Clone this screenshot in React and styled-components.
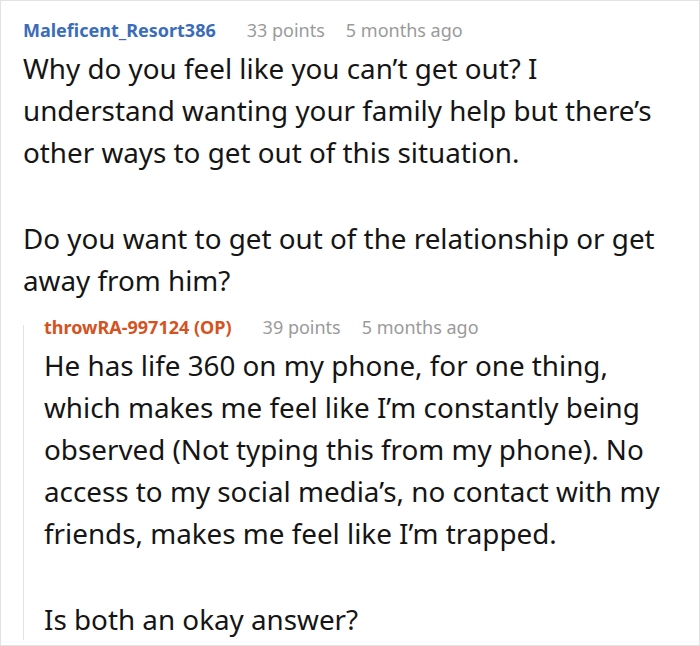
import styled, { createGlobalStyle } from "styled-components";

const Global = createGlobalStyle`
  body {
    margin: 0;
    background: #fff;
    font-family: "Noto Sans", "Open Sans", sans-serif;
  }
`;

const Frame = styled.div`
  width: 700px;
  height: 646px;
  box-sizing: border-box;
  border: 1px solid #e2e2e2;
  padding: 17px 38px 0 22px;
  overflow: hidden;
`;

const Meta = styled.div`
  display: flex;
  align-items: baseline;
  gap: 31px;
  font-size: 18px;
  line-height: 24px;
  white-space: nowrap;
`;

const Author = styled.span`
  font-weight: 700;
  color: ${(p) => (p.$op ? "#d4531f" : "#3b6cba")};
`;

const Info = styled.span`
  display: flex;
  gap: 21px;
  color: #9a9a9a;
`;

const Body = styled.div`
  margin-top: 5px;
  color: #151515;
  font-size: 27.8px;
  line-height: 42px;
`;

const Para = styled.p`
  margin: 0;
  & + & {
    margin-top: 44px;
  }
`;

const Reply = styled.div`
  position: relative;
  margin-top: 14px;
  padding-left: 21px;

  &::before {
    content: "";
    position: absolute;
    left: 0;
    top: 10px;
    bottom: 0;
    border-left: 1px solid #e3e3e3;
  }
`;

const Comment = ({ author, op, points, time, paras }) => (
  <div>
    <Meta>
      <Author $op={op}>{author}</Author>
      <Info>
        <span>{points} points</span>
        <span>{time}</span>
      </Info>
    </Meta>
    <Body>
      {paras.map((t, i) => (
        <Para key={i}>{t}</Para>
      ))}
    </Body>
  </div>
);

export default function App() {
  return (
    <>
      <Global />
      <Frame>
        <Comment
          author="Maleficent_Resort386"
          points={33}
          time="5 months ago"
          paras={[
            "Why do you feel like you can’t get out? I understand wanting your family help but there’s other ways to get out of this situation.",
            "Do you want to get out of the relationship or get away from him?",
          ]}
        />
        <Reply>
          <Comment
            author="throwRA-997124 (OP)"
            op
            points={39}
            time="5 months ago"
            paras={[
              "He has life 360 on my phone, for one thing, which makes me feel like I’m constantly being observed (Not typing this from my phone). No access to my social media’s, no contact with my friends, makes me feel like I’m trapped.",
              "Is both an okay answer?",
            ]}
          />
        </Reply>
      </Frame>
    </>
  );
}
